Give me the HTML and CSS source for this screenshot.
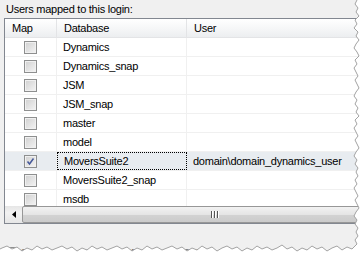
FILE: index.html
```html
<!DOCTYPE html>
<html>
<head>
    <link rel="stylesheet" href="styles.css">
</head>
<body>
<div class="panel">
    <div class="label">Users mapped to this login:</div>
    <div class="grid">
        <div class="row head">
            <div class="cell map">Map</div>
            <div class="cell db">Database</div>
            <div class="cell user">User</div>
        </div>
        <div class="rows">
            <div class="row"><div class="cell map"><span class="check"></span></div><div class="cell db">Dynamics</div><div class="cell user"></div></div>
            <div class="row"><div class="cell map"><span class="check"></span></div><div class="cell db">Dynamics_snap</div><div class="cell user"></div></div>
            <div class="row"><div class="cell map"><span class="check"></span></div><div class="cell db">JSM</div><div class="cell user"></div></div>
            <div class="row"><div class="cell map"><span class="check"></span></div><div class="cell db">JSM_snap</div><div class="cell user"></div></div>
            <div class="row"><div class="cell map"><span class="check"></span></div><div class="cell db">master</div><div class="cell user"></div></div>
            <div class="row"><div class="cell map"><span class="check"></span></div><div class="cell db">model</div><div class="cell user"></div></div>
            <div class="row selected"><div class="cell map"><span class="check checked"><svg width="11" height="11" viewBox="0 0 11 11"><path d="M2.5 5.5 L4.5 8 L8.5 2.5" fill="none" stroke="#44589a" stroke-width="1.5"/></svg></span></div><div class="cell db focus">MoversSuite2</div><div class="cell user">domain\domain_dynamics_user</div></div>
            <div class="row"><div class="cell map"><span class="check"></span></div><div class="cell db">MoversSuite2_snap</div><div class="cell user"></div></div>
            <div class="row"><div class="cell map"><span class="check"></span></div><div class="cell db">msdb</div><div class="cell user"></div></div>
        </div>
        <div class="hscroll">
            <div class="arrow"><svg width="4" height="7" viewBox="0 0 4 7"><path d="M4 0 L0 3.5 L4 7 Z" fill="#000"/></svg></div>
            <div class="thumb"><span class="grip"></span><span class="grip"></span><span class="grip"></span></div>
        </div>
    </div>
    <div class="guest"><span class="check small"></span>Guest account enabled for: MoversSuite2</div>
    <svg class="torn" width="362" height="259" viewBox="0 0 362 259">
        <polygon fill="#fff" points="362,0 357,0 355,4 358,8 356,12 359,16 355,20 357,24 354,28 358,32 356,36 359,40 356,44 354,48 357,52 359,56 355,60 357,64 354,68 356,72 358,76 355,80 357,84 359,88 356,92 354,96 357,100 355,104 358,108 356,112 359,116 355,120 357,124 354,128 356,132 358,136 355,140 357,144 359,148 356,152 354,156 357,160 355,164 358,168 356,172 358,176 355,180 357,184 354,188 356,192 358,196 355,200 357,204 359,208 356,212 354,216 357,220 355,224 358,228 356,232 358,236 355,240 357,244 352,249 347,247 342,250 337,246 332,248 327,251 322,247 317,249 312,246 307,250 302,248 297,251 292,247 287,249 282,245 277,248 272,250 267,247 262,249 257,246 252,250 247,248 242,251 237,247 232,249 227,246 222,248 217,251 212,247 207,249 202,246 197,250 192,248 187,251 182,247 177,249 172,246 167,248 162,250 157,247 152,249 147,246 142,250 137,248 132,251 127,247 122,249 117,246 112,248 107,250 102,247 97,249 92,246 87,250 82,248 77,251 72,247 67,249 62,246 57,248 52,250 47,247 42,249 37,246 32,250 27,248 22,251 17,247 12,249 7,246 2,248 0,249 0,259 362,259"/>
        <polyline fill="none" stroke="#a3a3a3" stroke-width="1" points="357,0 355,4 358,8 356,12 359,16 355,20 357,24 354,28 358,32 356,36 359,40 356,44 354,48 357,52 359,56 355,60 357,64 354,68 356,72 358,76 355,80 357,84 359,88 356,92 354,96 357,100 355,104 358,108 356,112 359,116 355,120 357,124 354,128 356,132 358,136 355,140 357,144 359,148 356,152 354,156 357,160 355,164 358,168 356,172 358,176 355,180 357,184 354,188 356,192 358,196 355,200 357,204 359,208 356,212 354,216 357,220 355,224 358,228 356,232 358,236 355,240 357,244 352,249 347,247 342,250 337,246 332,248 327,251 322,247 317,249 312,246 307,250 302,248 297,251 292,247 287,249 282,245 277,248 272,250 267,247 262,249 257,246 252,250 247,248 242,251 237,247 232,249 227,246 222,248 217,251 212,247 207,249 202,246 197,250 192,248 187,251 182,247 177,249 172,246 167,248 162,250 157,247 152,249 147,246 142,250 137,248 132,251 127,247 122,249 117,246 112,248 107,250 102,247 97,249 92,246 87,250 82,248 77,251 72,247 67,249 62,246 57,248 52,250 47,247 42,249 37,246 32,250 27,248 22,251 17,247 12,249 7,246 2,248 0,249"/>
    </svg>
</div>
</body>
</html>
```

FILE: styles.css
```css
* {
    box-sizing: border-box;
}

body {
    margin: 0;
    background: #fff;
    font-family: "Liberation Sans", Arial, sans-serif;
    font-size: 11px;
    letter-spacing: -0.25px;
    color: #000;
}

.panel {
    position: relative;
    width: 362px;
    height: 259px;
    background: #f0f0f0;
    overflow: hidden;
}

.label {
    height: 18px;
    padding: 3px 0 0 6px;
    line-height: 12px;
}

.grid {
    margin-left: 4px;
    width: 404px;
    border: 1px solid #828790;
    background: #fff;
}

.row {
    display: grid;
    grid-template-columns: 52px 130px 1fr;
    height: 19px;
    border-bottom: 1px solid #f0f0f0;
}

.row.head {
    height: 19px;
    background: linear-gradient(#ffffff, #f5f6f7 55%, #eceef0);
    border-bottom: 1px solid #e3e4e6;
}

.cell {
    display: flex;
    align-items: center;
    padding-left: 6px;
    border-right: 1px solid #f0f0f0;
    white-space: nowrap;
}

.head .cell {
    padding-left: 7px;
    border-right: 1px solid #e3e4e6;
}

.cell.map {
    justify-content: center;
    padding-left: 0;
}

.head .cell.map {
    justify-content: flex-start;
    padding-left: 7px;
}

.rows {
    height: 168px;
    overflow: hidden;
}

.row.selected {
    background: #e8ecf0;
}

.cell.focus {
    border: 1px dotted #000;
}

.check {
    display: inline-flex;
    align-items: center;
    justify-content: center;
    width: 13px;
    height: 13px;
    border: 1px solid #8e8f8f;
    background: linear-gradient(135deg, #d0d0d0, #f4f4f4);
    box-shadow: inset 0 0 0 1px #f0f0f0;
}

.hscroll {
    display: flex;
    height: 17px;
    background: linear-gradient(#e6e6e6, #f2f2f2 40%, #e6e6e6);
}

.arrow {
    width: 17px;
    display: flex;
    align-items: center;
    justify-content: center;
}

.thumb {
    flex: 1;
    display: flex;
    justify-content: center;
    align-items: center;
    gap: 1px;
    border: 1px solid #979797;
    border-radius: 2px;
    background: linear-gradient(#f2f2f2, #e5e5e5 50%, #d3d3d3 51%, #cbcbcb);
}

.grip {
    width: 2px;
    height: 7px;
    background: #555;
    border-right: 1px solid #fff;
}

.guest {
    display: flex;
    align-items: center;
    gap: 4px;
    margin: 23px 0 0 4px;
    color: #6d6d6d;
}

.check.small {
    width: 12px;
    height: 12px;
}

.torn {
    position: absolute;
    left: 0;
    top: 0;
}
```
